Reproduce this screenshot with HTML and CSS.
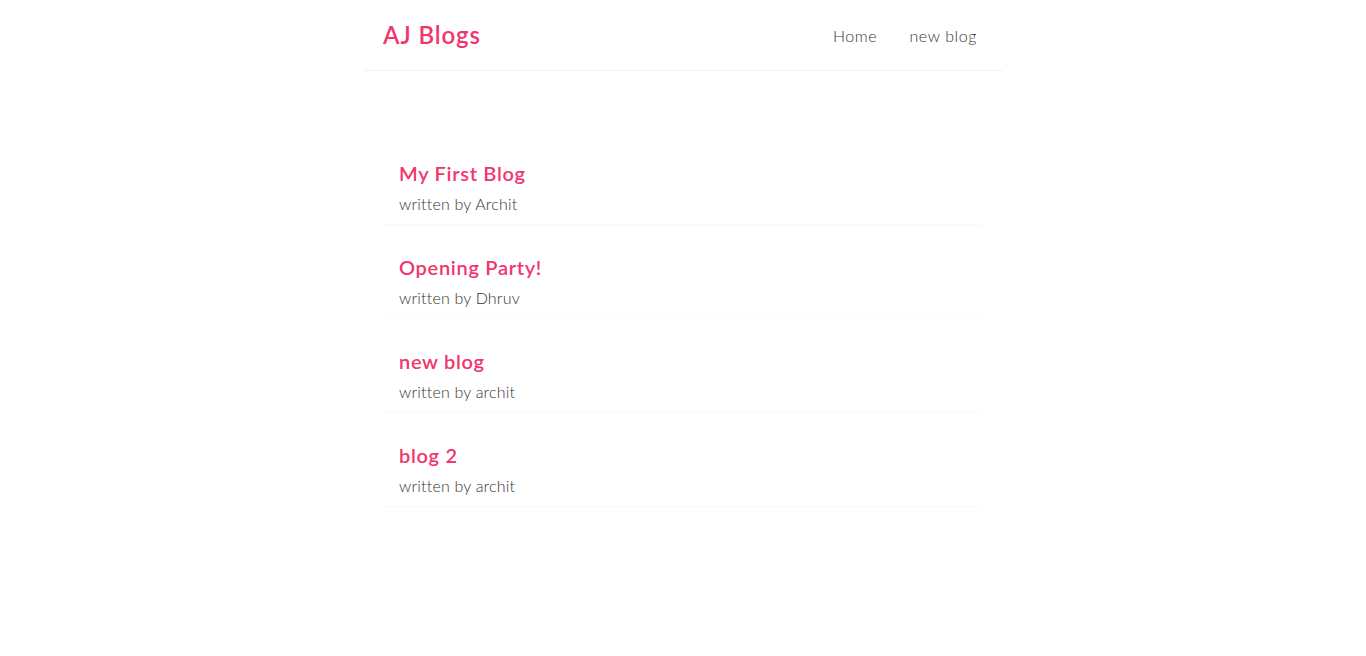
FILE: index.html
```html
<!DOCTYPE html>
<html lang="en">
<head>
<meta charset="utf-8">
<title>AJ Blogs</title>
<link rel="stylesheet" href="styles.css">
</head>
<body>
<div class="app">
  <nav class="navbar">
    <h1>AJ Blogs</h1>
    <div class="links">
      <a href="#">Home</a>
      <a href="#">new blog</a>
    </div>
  </nav>
  <div class="content">
    <div class="home">
      <div class="blog-preview">
        <h2>My First Blog</h2>
        <p>written by Archit</p>
      </div>
      <div class="blog-preview">
        <h2>Opening Party!</h2>
        <p>written by Dhruv</p>
      </div>
      <div class="blog-preview">
        <h2>new blog</h2>
        <p>written by archit</p>
      </div>
      <div class="blog-preview">
        <h2>blog 2</h2>
        <p>written by archit</p>
      </div>
    </div>
  </div>
</div>
</body>
</html>
```

FILE: styles.css
```css
* {
  margin: 0;
  font-family: "Lato", "Open Sans", sans-serif;
  color: #333;
}
body {
  background: #fff;
}
.navbar {
  padding: 20px;
  display: flex;
  align-items: center;
  max-width: 600px;
  margin: 0 auto;
  border-bottom: 1px solid #f2f2f2;
}
.navbar h1 {
  color: #f1356d;
  font-size: 24px;
  line-height: 30px;
  font-weight: 600;
  letter-spacing: 0.9px;
}
.navbar .links {
  margin-left: auto;
}
.navbar a {
  margin-left: 16px;
  text-decoration: none;
  padding: 6px;
  font-size: 16px;
  font-weight: 300;
  letter-spacing: 0.6px;
}
.content {
  max-width: 600px;
  margin: 40px auto;
  padding: 20px;
}
.blog-preview {
  padding: 10px 16px;
  margin: 20px 0;
  border-bottom: 1px solid #fafafa;
}
.blog-preview h2 {
  font-size: 20px;
  line-height: 25px;
  color: #f1356d;
  margin-bottom: 8px;
  font-weight: 600;
  letter-spacing: 0.7px;
}
.blog-preview p {
  font-size: 16px;
  line-height: 20px;
  font-weight: 300;
  letter-spacing: 0.2px;
}
```
